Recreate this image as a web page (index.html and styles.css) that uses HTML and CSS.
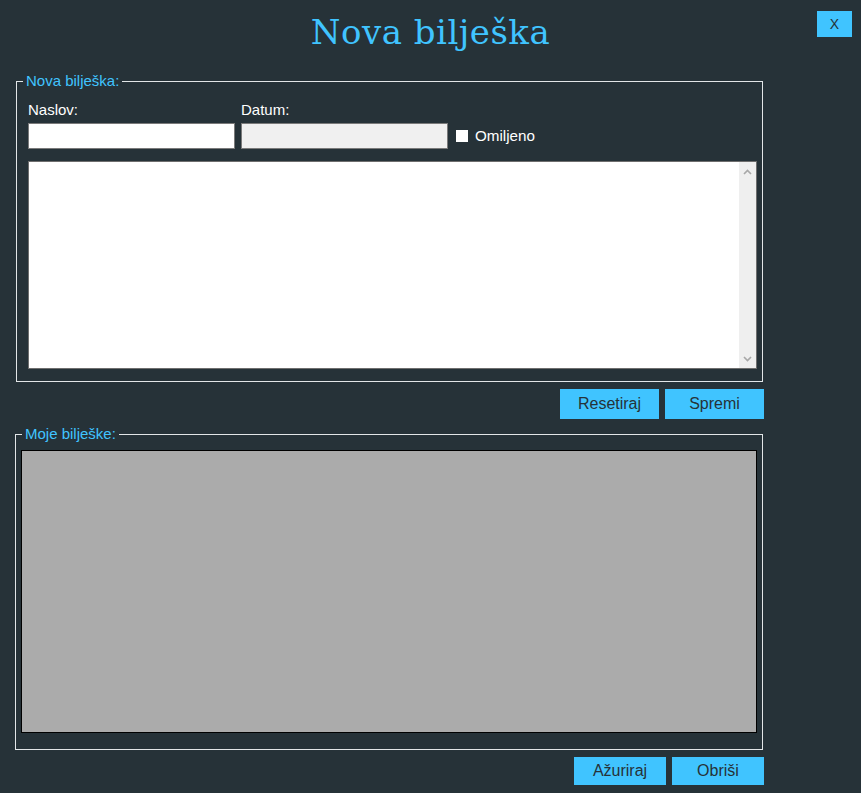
FILE: index.html
```html
<!DOCTYPE html>
<html lang="hr">
<head>
<meta charset="utf-8">
<title>Nova bilješka</title>
<link rel="stylesheet" href="styles.css">
</head>
<body>
<header class="header">
  <h1 class="title">Nova bilješka</h1>
  <button class="close-btn" type="button">X</button>
</header>
<main class="main">
  <fieldset class="box box-new">
    <legend class="legend legend-new">Nova bilješka:</legend>
    <div class="form-grid">
      <label class="label">Naslov:</label>
      <label class="label">Datum:</label>
      <span></span>
      <input class="input" type="text">
      <input class="input input-disabled" type="text" disabled>
      <div class="check">
        <span class="check-box"></span>
        <span class="check-label">Omiljeno</span>
      </div>
    </div>
    <div class="textarea-wrap">
      <textarea class="textarea"></textarea>
      <div class="scrollbar">
        <svg class="arrow" width="9" height="6" viewBox="0 0 9 6"><path d="M1 5 L4.5 1.5 L8 5" fill="none" stroke="#a8a8a8" stroke-width="1.6"/></svg>
        <svg class="arrow" width="9" height="6" viewBox="0 0 9 6"><path d="M1 1 L4.5 4.5 L8 1" fill="none" stroke="#a8a8a8" stroke-width="1.6"/></svg>
      </div>
    </div>
  </fieldset>
  <div class="actions actions-top">
    <button class="btn btn-wide" type="button">Resetiraj</button>
    <button class="btn btn-wide" type="button">Spremi</button>
  </div>
  <fieldset class="box box-list">
    <legend class="legend legend-list">Moje bilješke:</legend>
    <div class="list"></div>
  </fieldset>
  <div class="actions actions-bottom">
    <button class="btn btn-narrow" type="button">Ažuriraj</button>
    <button class="btn btn-narrow" type="button">Obriši</button>
  </div>
</main>
</body>
</html>
```
FILE: styles.css
```css
* { box-sizing: border-box; }

html, body {
  margin: 0;
  padding: 0;
  background: #263238;
  width: 861px;
  height: 793px;
  overflow: hidden;
}

body {
  font-family: "Liberation Sans", Arial, sans-serif;
  font-size: 15px;
  color: #ffffff;
}

.header {
  display: grid;
  grid-template-columns: 1fr auto 1fr;
  align-items: start;
  height: 72px;
  padding-top: 11px;
}

.title {
  grid-column: 2;
  margin: 1px 0 0 0;
  font-family: "DejaVu Serif", "Liberation Serif", serif;
  font-weight: normal;
  font-size: 34px;
  line-height: 40px;
  color: #40c4ff;
  letter-spacing: 0.5px;
}

.close-btn {
  grid-column: 3;
  justify-self: end;
  margin-right: 9px;
  width: 35px;
  height: 26px;
  border: none;
  padding: 0;
  background: #40c4ff;
  color: #263238;
  font-family: "Liberation Sans", Arial, sans-serif;
  font-size: 14px;
}

.main {
  padding: 0 97px 0 15px;
}

.box {
  margin: 0;
  border: 1px solid #e2e6e8;
  min-width: 0;
}

.box-new {
  margin: 0 1px;
  padding: 11px 5px 12px 11px;
}

.box-list {
  margin: 0 1px 0 0;
  padding: 7px 5px 16px 5px;
}

.legend {
  color: #40c4ff;
  font-size: 15px;
  line-height: 18px;
  padding: 0 3px;
}

.legend-new { margin-left: -5px; }
.legend-list { margin-left: 1px; }

.form-grid {
  display: grid;
  grid-template-columns: 207px 207px auto;
  column-gap: 6px;
  row-gap: 5px;
  align-items: center;
}

.label {
  font-size: 15px;
  line-height: 17px;
  color: #ffffff;
}

.input {
  height: 26px;
  width: 207px;
  border: 1px solid #7a7a7a;
  background: #ffffff;
  margin: 0;
  padding: 2px 4px;
  font-family: "Liberation Sans", Arial, sans-serif;
  font-size: 15px;
}

.input-disabled {
  background: #f0f0f0;
}

.check {
  display: flex;
  align-items: center;
  margin-left: 2px;
}

.check-box {
  width: 12px;
  height: 12px;
  background: #ffffff;
  margin-right: 7px;
}

.check-label {
  font-size: 15.2px;
  line-height: 18px;
}

.textarea-wrap {
  margin-top: 12px;
  height: 208px;
  width: 729px;
  border: 1px solid #6e6e6e;
  background: #ffffff;
  display: flex;
}

.textarea {
  flex: 1;
  border: none;
  margin: 0;
  padding: 3px;
  resize: none;
  outline: none;
  background: #ffffff;
  font-family: "Liberation Sans", Arial, sans-serif;
  font-size: 15px;
}

.scrollbar {
  width: 17px;
  background: #efefef;
  display: flex;
  flex-direction: column;
  justify-content: space-between;
  align-items: center;
  padding: 7px 0 6px 0;
}

.arrow { display: block; }

.actions {
  display: flex;
  justify-content: flex-end;
  gap: 6px;
}

.actions-top {
  margin: 7px 0 6px 0;
}

.actions-bottom {
  margin-top: 7px;
}

.btn {
  border: none;
  padding: 0;
  background: #40c4ff;
  color: #263238;
  font-family: "Liberation Sans", Arial, sans-serif;
  font-size: 16px;
}

.btn-wide {
  width: 99px;
  height: 30px;
}

.btn-narrow {
  width: 92px;
  height: 28px;
}

.list {
  height: 283px;
  border: 1px solid #000000;
  background: #ababab;
}
```
